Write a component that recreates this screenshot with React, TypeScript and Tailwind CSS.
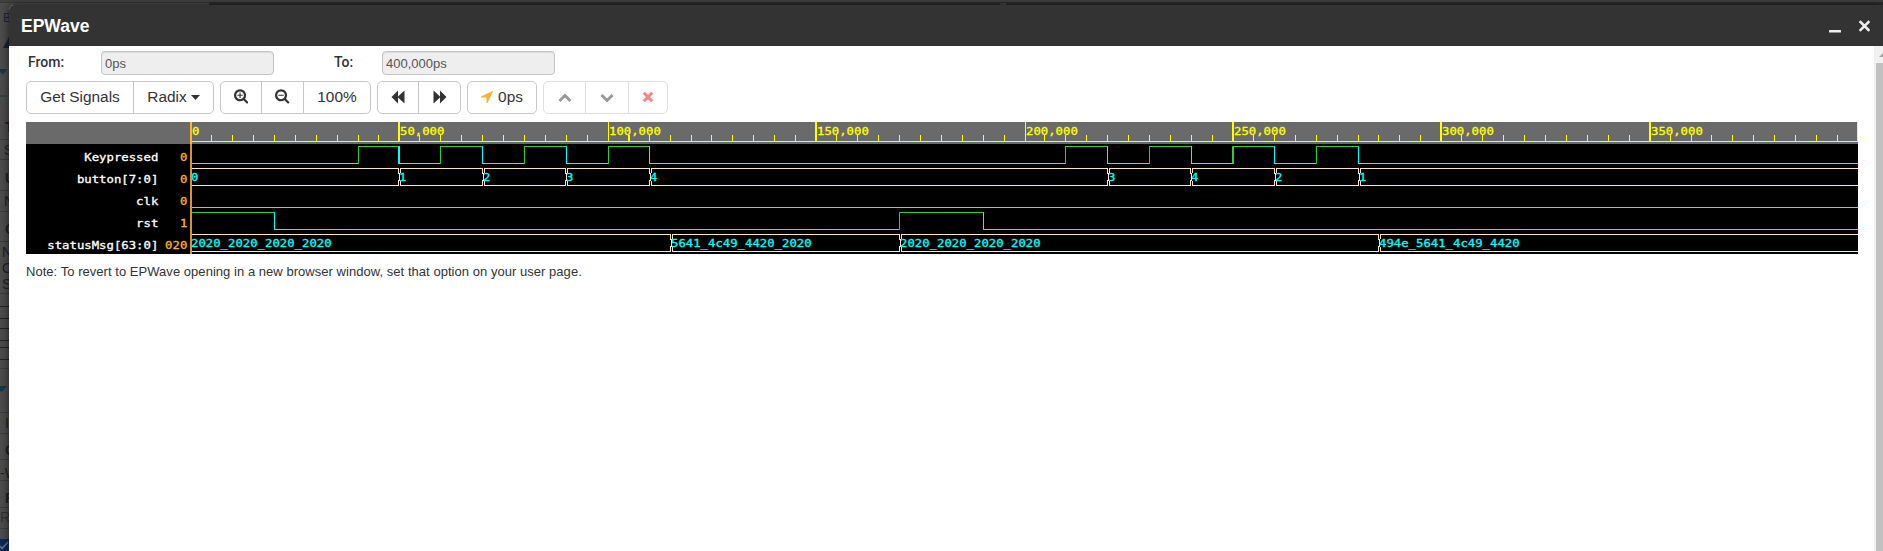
import React from "react";

const MAJOR = [
  { x: 398, w: 2, label: "50,000" },
  { x: 608, w: 1, label: "100,000" },
  { x: 815, w: 2, label: "150,000" },
  { x: 1025, w: 1, label: "200,000" },
  { x: 1232, w: 2, label: "250,000" },
  { x: 1440, w: 2, label: "300,000" },
  { x: 1649, w: 2, label: "350,000" },
  { x: 1857, w: 1, label: "" },
];

const MINOR = [
  211, 232, 253, 274, 295, 316, 337, 358, 378, 419, 440, 461, 482, 503, 524, 545, 566, 587, 628, 649, 670, 691, 711,
  732, 753, 774, 795, 836, 857, 878, 899, 920, 941, 962, 983, 1004, 1044, 1065, 1086, 1107, 1128, 1149, 1170, 1191,
  1212, 1253, 1274, 1295, 1316, 1337, 1358, 1378, 1399, 1420, 1461, 1482, 1503, 1524, 1545, 1566, 1587, 1608, 1629,
  1670, 1691, 1711, 1732, 1753, 1774, 1795, 1816, 1837,
];

const START = 192;
const END = 1858;
const CHAR = 7.4;
const LOW = "#00ffff";
const HIGH = "#32cd32";
const BUS = "#ffe4c4";

function Mono({ x, y, color, text, end = false }: { x: number; y: number; color: string; text: string; end?: boolean }) {
  return (
    <text
      x={x}
      y={y}
      fill={color}
      stroke={color}
      strokeWidth={0.3}
      shapeRendering="auto"
      textAnchor={end ? "end" : "start"}
      textLength={CHAR * text.length}
      lengthAdjust="spacingAndGlyphs"
    >
      {text}
    </text>
  );
}

type Edge = { x: number; w?: number };

function BitWave({ top, initial, edges }: { top: number; initial: 0 | 1; edges: Edge[] }) {
  const parts: React.ReactNode[] = [];
  let level = initial;
  let from = START;
  edges.forEach((e, i) => {
    const w = e.w ?? 1;
    parts.push(
      <rect key={"h" + i} x={from} y={top + (level ? 2 : 19)} width={e.x + 1 - from} height={1} fill={level ? HIGH : LOW} />,
    );
    level = level ? 0 : 1;
    parts.push(<rect key={"v" + i} x={e.x} y={top + 2} width={w} height={18} fill={level ? HIGH : LOW} />);
    from = e.x + w;
  });
  parts.push(<rect key="end" x={from} y={top + (level ? 2 : 19)} width={END - from} height={1} fill={level ? HIGH : LOW} />);
  return <g>{parts}</g>;
}

function BusWave({ top, values }: { top: number; values: { x: number; text: string }[] }) {
  return (
    <g>
      {values.map((v, i) => {
        const last = i === values.length - 1;
        const to = last ? END : values[i + 1].x + 1;
        const from = i === 0 ? START : v.x + 2;
        return (
          <g key={v.x} fill={BUS}>
            <rect x={from} y={top + 2} width={to - from} height={1} />
            <rect x={from} y={top + 19} width={to - from} height={1} />
            {i > 0 && (
              <>
                <rect x={v.x} y={top + 2} width={1} height={6} />
                <rect x={v.x} y={top + 14} width={1} height={6} />
                <rect x={v.x + 1} y={top + 7} width={1} height={8} />
                <rect x={v.x + 2} y={top + 2} width={1} height={5} />
                <rect x={v.x + 2} y={top + 15} width={1} height={5} />
              </>
            )}
            <Mono x={v.x + 1} y={top + 15} color={LOW} text={v.text} />
          </g>
        );
      })}
    </g>
  );
}

const SIGNALS = [
  { top: 144, name: "Keypressed", value: "0" },
  { top: 166, name: "button[7:0]", value: "0" },
  { top: 188, name: "clk", value: "0" },
  { top: 210, name: "rst", value: "1" },
  { top: 232, name: "statusMsg[63:0]", value: "020" },
];

function Waveform() {
  return (
    <svg
      width={1832}
      height={132}
      viewBox="26 122 1832 132"
      shapeRendering="crispEdges"
      className="block shrink-0 font-['DejaVu_Sans_Mono',monospace] text-[10.8px]"
    >
      <rect x={26} y={122} width={1832} height={132} fill="#000" />
      <rect x={26} y={122} width={1832} height={22} fill="#6a6a6a" />
      <g fill="#ffff00">
        <rect x={192} y={141} width={1666} height={1} />
        {MINOR.map((x) => (
          <rect key={x} x={x} y={135} width={x === 628 ? 2 : 1} height={6} />
        ))}
        {MAJOR.map((m) => (
          <g key={m.x}>
            <rect x={m.x} y={122} width={m.w} height={19} />
            {m.label && <Mono x={m.x + m.w} y={135} color="#ffff00" text={m.label} />}
          </g>
        ))}
        <Mono x={192} y={135} color="#ffff00" text="0" />
      </g>
      {SIGNALS.map((s) => (
        <g key={s.name}>
          <Mono end x={158.3} y={s.top + 17} color="#fff" text={s.name} />
          <Mono end x={187.3} y={s.top + 17} color="#ffb02e" text={s.value} />
        </g>
      ))}
      <BitWave
        top={144}
        initial={0}
        edges={[
          { x: 358 }, { x: 398, w: 2 }, { x: 440 }, { x: 482 }, { x: 524 }, { x: 566 }, { x: 608 }, { x: 649 },
          { x: 1065 }, { x: 1107 }, { x: 1149 }, { x: 1191 }, { x: 1232, w: 2 }, { x: 1274 }, { x: 1316 }, { x: 1358 },
        ]}
      />
      <BusWave
        top={166}
        values={[
          { x: 190, text: "0" }, { x: 398, text: "1" }, { x: 482, text: "2" }, { x: 565, text: "3" },
          { x: 649, text: "4" }, { x: 1107, text: "3" }, { x: 1190, text: "4" }, { x: 1274, text: "2" },
          { x: 1358, text: "1" },
        ]}
      />
      <BitWave top={188} initial={0} edges={[]} />
      <BitWave top={210} initial={1} edges={[{ x: 274 }, { x: 899 }, { x: 983 }]} />
      <BusWave
        top={232}
        values={[
          { x: 190, text: "2020_2020_2020_2020" }, { x: 670, text: "5641_4c49_4420_2020" },
          { x: 899, text: "2020_2020_2020_2020" }, { x: 1378, text: "494e_5641_4c49_4420" },
        ]}
      />
      <rect x={190} y={122} width={2} height={22} fill="#ffb52e" />
      <rect x={190} y={144} width={2} height={110} fill="#d8962a" />
    </svg>
  );
}

const LENS =
  "M1152 736q0-185-131.500-316.500t-316.500-131.500-316.500 131.500-131.500 316.500 131.500 316.500 316.500 131.500 316.500-131.500 131.500-316.500zm512 832q0 53-37.500 90.500t-90.500 37.500q-54 0-90-38l-343-342q-179 124-399 124-143 0-273.500-55.500t-225-150-150-225-55.500-273.500 55.500-273.500 150-225 225-150 273.500-55.500 273.500 55.500 225 150 150 225 55.500 273.500q0 220-124 399l343 343q37 37 37 90z";

function Zoom({ plus = false }: { plus?: boolean }) {
  return (
    <svg width="14.300" height="15.400" viewBox="0 0 1664 1792" fill="#333">
      <path d={LENS} />
      <rect x="384" y="672" width="640" height="128" rx="32" />
      {plus && <rect x="640" y="416" width="128" height="640" rx="32" />}
    </svg>
  );
}

function Group({ children, faded = false }: { children: React.ReactNode; faded?: boolean }) {
  return (
    <div
      className={
        "flex h-[33px] shrink-0 divide-x rounded-[5px] border bg-white " +
        (faded ? "divide-[#e0e0e0] border-[#e0e0e0]" : "divide-[#c8c8c8] border-[#c8c8c8]")
      }
    >
      {children}
    </div>
  );
}

function Cell({ width, children }: { width: string; children: React.ReactNode }) {
  return (
    <button className={"flex items-center justify-center pb-px text-[15.4px] leading-none text-[#333] " + width}>
      {children}
    </button>
  );
}

function Field({ value }: { value: string }) {
  return (
    <input
      readOnly
      value={value}
      className="h-6 w-[173px] rounded-[4px] border border-[#c4c4c4] bg-[#eee] px-[3px] pt-px text-[13px] font-normal text-[#555] shadow-[inset_0_1px_1px_rgba(0,0,0,0.08)] outline-none"
    />
  );
}

function Backdrop() {
  return (
    <div className="absolute inset-0 overflow-hidden bg-[#4c4c4c] text-[14px] leading-none text-[#202020]">
      <div className="absolute left-0 top-0 h-[3px] w-full bg-[#424242]" />
      <div className="absolute left-[209px] top-[2px] h-4 w-full bg-[#2d2d2d]" />
      <div className="absolute left-0 top-[2px] h-px w-[210px] bg-[#393939]" />
      <div className="absolute left-[1000px] top-[3px] h-[3px] w-[6px] bg-[#444]" />
      <span className="absolute left-[3px] top-[12px] text-[12px] text-[#20243f]">B</span>
      <svg width="9" height="551" viewBox="0 0 9 551" className="absolute left-0 top-0">
        <path d="M3 48L10 35V48Z" fill="#1c2138" />
        <path d="M0 69H7L3 74.500L0 72Z" fill="#173747" />
        <path d="M0 96H7" stroke="#173747" />
        {[139, 159, 190, 211, 241, 293, 368, 412, 433, 459, 480, 507, 528].map((y) => (
          <rect key={y} y={y} width="9" height="1" fill="#3b3b3b" />
        ))}
        {[306, 318, 328, 340, 347, 359].map((y) => (
          <rect key={y} y={y} width="9" height="1" fill="#222" />
        ))}
        <path d="M0 386H7L2 392L0 391Z" fill="#173747" />
        <rect y="539" width="9" height="12" fill="#0b2a58" />
        <path d="M0 546L2 548.500L8 542" stroke="#687488" strokeWidth="1.500" fill="none" />
      </svg>
      <span className="absolute left-[8px] top-[84px] text-[#173747]">i</span>
      <b className="absolute left-[5px] top-[120px]">T</b>
      <span className="absolute left-[4px] top-[143px]">S</span>
      <b className="absolute left-[5px] top-[171px]">U</b>
      <span className="absolute left-[4px] top-[194px]">N</span>
      <b className="absolute left-[5px] top-[222px]">O</b>
      <span className="absolute left-[2px] top-[245px]">N</span>
      <span className="absolute left-[2px] top-[261px]">C</span>
      <span className="absolute left-[2px] top-[277px]">S</span>
      <span className="absolute left-[5px] top-[416px]">Ic</span>
      <b className="absolute left-[5px] top-[443px]">O</b>
      <span className="absolute left-0 top-[466px]">-W</span>
      <b className="absolute left-[5px] top-[491px]">F</b>
      <span className="absolute left-0 top-[510px] text-[#303030]">R</span>
    </div>
  );
}

export default function App() {
  return (
    <div className="relative h-[551px] w-[1883px] overflow-hidden font-['Liberation_Sans',Arial,sans-serif] text-[#333]">
      <Backdrop />
      <div className="relative ml-[9px] flex h-full flex-col pt-[5px]">
        <div className="flex min-h-0 grow flex-col overflow-hidden rounded-tl-[5px] bg-white shadow-[0_0_8px_rgba(0,0,0,0.65)]">
          <header className="flex h-[41px] shrink-0 items-center justify-between bg-[#333] pl-3 pr-[13px]">
            <h1 className="pt-[2px] text-[17.5px] font-bold leading-none text-white">EPWave</h1>
            <div className="flex items-center gap-[17px]">
              <svg width="12" height="14" viewBox="0 0 12 14">
                <rect y="11" width="12" height="2.500" rx=".5" fill="#eee" />
              </svg>
              <svg width="12" height="12" viewBox="0 0 12 12">
                <path d="M2.500 2L10.500 10M10.500 2L2.500 10" stroke="#eee" strokeWidth="2.500" strokeLinecap="square" />
              </svg>
            </div>
          </header>
          <div className="flex min-h-0 grow">
            <main className="flex w-[1865px] shrink-0 flex-col pl-[17px] pt-[5px]">
              <div className="flex h-6 items-center pl-[2px]">
                <label className="w-[73px] pb-[2px] font-[Roboto,sans-serif] text-[14px] font-medium">From:</label>
                <Field value="0ps" />
                <label className="ml-[60px] w-[48px] pb-[2px] font-[Roboto,sans-serif] text-[14px] font-medium">To:</label>
                <Field value="400,000ps" />
              </div>
              <div className="mt-[6px] flex gap-[6px]">
                <Group>
                  <Cell width="w-[107px]">Get Signals</Cell>
                  <Cell width="w-[79px]">
                    Radix
                    <svg width="9" height="5" viewBox="0 0 9 5" className="ml-1">
                      <path d="M0 0H9L4.500 5Z" fill="#333" />
                    </svg>
                  </Cell>
                </Group>
                <Group>
                  <Cell width="w-[41px]">
                    <Zoom plus />
                  </Cell>
                  <Cell width="w-[42px]">
                    <Zoom />
                  </Cell>
                  <Cell width="w-[66px]">100%</Cell>
                </Group>
                <Group>
                  <Cell width="w-[41px]">
                    <svg width="14" height="14" viewBox="0 0 14 14" fill="#333">
                      <path d="M0.500 7L7 .5V6.500L13.500 .5V13.500L7 7.500V13.500Z" />
                    </svg>
                  </Cell>
                  <Cell width="w-[41px]">
                    <svg width="14" height="14" viewBox="0 0 14 14" fill="#333">
                      <path d="M13.500 7L7 .5V6.500L.5 .5V13.500L7 7.500V13.500Z" />
                    </svg>
                  </Cell>
                </Group>
                <Group>
                  <Cell width="w-[68px]">
                    <svg width="12" height="12" viewBox="0 0 12 12" className="mr-[5px]">
                      <path d="M11.500 0L12 .6L6.500 12H5.500V6.500H0V5.500Z" fill="#ffb12e" />
                    </svg>
                    0ps
                  </Cell>
                </Group>
                <Group faded>
                  <Cell width="w-[42px]">
                    <svg width="14" height="10" viewBox="0 0 14 10" className="mt-[2px]">
                      <path d="M1.500 8L7 2.500L12.500 8" stroke="#999" strokeWidth="3" fill="none" />
                    </svg>
                  </Cell>
                  <Cell width="w-[43px]">
                    <svg width="14" height="10" viewBox="0 0 14 10" className="mt-[2px]">
                      <path d="M1.500 2L7 7.500L12.500 2" stroke="#999" strokeWidth="3" fill="none" />
                    </svg>
                  </Cell>
                  <Cell width="w-[38px]">
                    <svg width="10" height="10" viewBox="0 0 10 10">
                      <path d="M1.800 1.800L8.200 8.200M8.200 1.800L1.800 8.200" stroke="#ff7f7f" strokeWidth="3" strokeLinecap="square" />
                    </svg>
                  </Cell>
                </Group>
              </div>
              <div className="mt-2 flex">
                <Waveform />
              </div>
              <p className="mt-2 text-[13px] leading-5 tracking-[0.04px]">
                Note: To revert to EPWave opening in a new browser window, set that option on your user page.
              </p>
            </main>
            <div className="flex grow flex-col bg-[#f1f1f1] pl-[2px]">
              <svg width="7" height="17" viewBox="0 0 7 17" className="shrink-0">
                <path d="M3 11L7 7V11Z" fill="#a3a3a3" />
              </svg>
              <div className="grow bg-[#c1c1c1]" />
            </div>
          </div>
        </div>
      </div>
    </div>
  );
}
